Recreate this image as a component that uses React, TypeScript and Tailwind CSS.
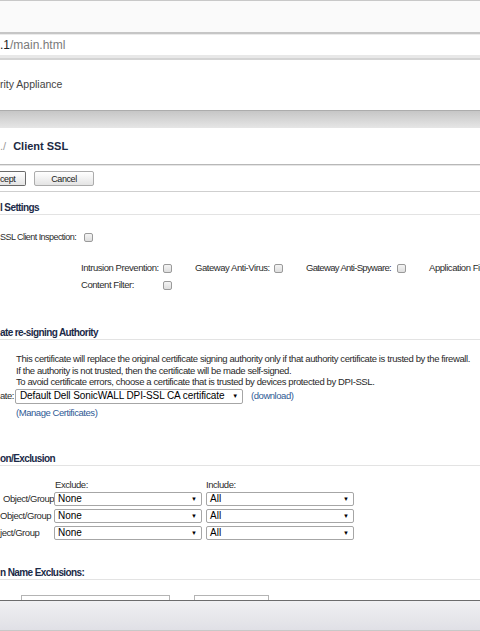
import React from "react";

const label = "font-['Liberation_Sans',Arial,sans-serif] text-[9.5px] tracking-[-0.45px] leading-[12px] text-[#2c2c2c]";
const body = "font-['Liberation_Sans',Arial,sans-serif] text-[9.5px] tracking-[-0.4px] leading-[11.5px] text-[#2a2a2a]";
const title = "font-['Liberation_Sans',Arial,sans-serif] font-bold text-[10px] tracking-[-0.6px] leading-[12px] text-[#1b2a48]";
const link = "font-['Liberation_Sans',Arial,sans-serif] text-[9.5px] tracking-[-0.45px] leading-[12px] text-[#2f5a95]";

function Check() {
  return <span className="shrink-0 inline-block w-[9px] h-[9px] rounded-[2px] border border-[#9a9a9a] bg-gradient-to-b from-[#f4f4f4] to-[#dedede]" />;
}

function Select({ value, w }: { value: string; w: string }) {
  return (
    <div className={`${w} shrink-0 h-[14px] flex items-center justify-between border border-[#a6a6a6] rounded-[2px] bg-white pl-[3px] pr-[4px] font-['Liberation_Sans',Arial,sans-serif] text-[10px] text-black`}>
      <span className="leading-[12px]">{value}</span>
      <span className="text-[6px] leading-none">▼</span>
    </div>
  );
}

function SectionTitle({ text }: { text: string }) {
  return (
    <div className="border-b border-[#e3e3e3]">
      <div className={`${title} h-[12px] whitespace-nowrap`}>{text}</div>
    </div>
  );
}

export default function App() {
  return (
    <div className="w-[480px] h-[631px] overflow-hidden bg-white flex flex-col">
      {/* browser chrome */}
      <div className="h-[32px] shrink-0 bg-[#fafafa] border-t border-[#c8c8c8]" />
      <div className="h-[2px] shrink-0 bg-[#c6c6c6]" />
      <div className="h-[1px] shrink-0 bg-[#ebebeb]" />
      <div className="h-[20px] shrink-0 flex items-center font-['Liberation_Sans',Arial,sans-serif] text-[12px] leading-[14px]">
        <span className="text-[#222]">.1</span>
        <span className="text-[#7a7a7a]">/main.html</span>
      </div>
      <div className="h-[3px] shrink-0 bg-[#e8e8e8]" />
      <div className="h-[2px] shrink-0 bg-[#d4d4d4]" />

      {/* appliance header */}
      <div className="h-[50px] shrink-0 flex items-center font-['Liberation_Sans',Arial,sans-serif] text-[10.5px] text-[#444]">
        rity Appliance
      </div>
      <div className="h-[18px] shrink-0 border-t border-[#acacac] bg-gradient-to-b from-[#c6c6c6] to-[#e6e6e6]" />

      {/* page heading */}
      <div className="h-[36px] shrink-0 flex items-center font-['Liberation_Sans',Arial,sans-serif] font-bold text-[11px] text-[#1c2a44]">
        <span className="text-[#9a9a9a] font-normal">./</span>
        <span className="ml-[7px]">Client SSL</span>
      </div>
      <div className="h-[1px] shrink-0 bg-[#b8b8b8]" />
      <div className="h-[26px] shrink-0 flex items-center gap-[8px] border-t border-[#e6e6e6]">
        <button className="h-[15px] w-[26px] border border-l-0 border-[#6a6a6a] rounded-r-[2px] bg-gradient-to-b from-white to-[#e4e4e4] text-left font-['Liberation_Sans',Arial,sans-serif] text-[9px] tracking-[-0.4px] leading-[12px] text-[#222]">
          cept
        </button>
        <button className="h-[15px] w-[60px] border border-[#acacac] rounded-[2px] bg-gradient-to-b from-white to-[#e4e4e4] font-['Liberation_Sans',Arial,sans-serif] text-[9px] tracking-[-0.4px] leading-[12px] text-[#222]">
          Cancel
        </button>
      </div>
      <div className="h-[1px] shrink-0 bg-[#cfcfcf]" />

      {/* general settings */}
      <div className="pt-[10px] shrink-0">
        <SectionTitle text="l Settings" />
      </div>
      <div className="shrink-0 pt-[15px] h-[29px] flex items-center gap-[7px]">
        <span className={`${label} text-[9px] tracking-[-0.55px] w-[77px] shrink-0 whitespace-nowrap`}>SSL Client Inspection:</span>
        <Check />
      </div>
      <div className="shrink-0 mt-[17px] pl-[81px] h-[14px] flex items-center">
        <span className={`${label} w-[82px] shrink-0 whitespace-nowrap`}>Intrusion Prevention:</span>
        <Check />
        <span className={`${label} w-[79px] ml-[23px] shrink-0 whitespace-nowrap`}>Gateway Anti-Virus:</span>
        <Check />
        <span className={`${label} tracking-[-0.65px] w-[91px] ml-[23px] shrink-0 whitespace-nowrap`}>Gateway Anti-Spyware:</span>
        <Check />
        <span className={`${label} ml-[23px] whitespace-nowrap`}>Application Firewall:</span>
      </div>
      <div className="shrink-0 mt-[3px] pl-[81px] h-[14px] flex items-center">
        <span className={`${label} w-[82px] shrink-0`}>Content Filter:</span>
        <Check />
      </div>

      {/* certificate authority */}
      <div className="pt-[35px] shrink-0">
        <SectionTitle text="ate re-signing Authority" />
      </div>
      <div className={`${body} pt-[13px] pl-[16px] whitespace-nowrap shrink-0`}>
        <div>This certificate will replace the original certificate signing authority only if that authority certificate is trusted by the firewall.</div>
        <div>If the authority is not trusted, then the certificate will be made self-signed.</div>
        <div>To avoid certificate errors, choose a certificate that is trusted by devices protected by DPI-SSL.</div>
      </div>
      <div className="shrink-0 mt-[1px] h-[15px] flex items-center">
        <span className={`${label} w-[15px] shrink-0`}>ate:</span>
        <div className="w-[228px] shrink-0 h-[15px] flex items-center border border-[#a6a6a6] rounded-[2px] bg-white pl-[4px] pr-[4px] font-['Liberation_Sans',Arial,sans-serif] text-[10px] tracking-[-0.1px] text-black">
          <span className="leading-[12px] whitespace-nowrap">Default Dell SonicWALL DPI-SSL CA certificate</span>
          <span className="ml-auto text-[6px] leading-none">▼</span>
        </div>
        <span className={`${link} ml-[8px]`}>(download)</span>
      </div>
      <div className={`${link} shrink-0 pl-[16px] mt-[3px] h-[12px]`}>(Manage Certificates)</div>

      {/* inclusion / exclusion */}
      <div className="pt-[34px] shrink-0">
        <SectionTitle text="on/Exclusion" />
      </div>
      <div className="shrink-0 mt-[13px] h-[12px] flex items-center">
        <span className={`${label} ml-[55px] w-[151px] shrink-0`}>Exclude:</span>
        <span className={label}>Include:</span>
      </div>
      <div className="shrink-0 mt-[1px] flex flex-col gap-[3px]">
        {["Object/Group", "Object/Group", "ject/Group"].map((t, i) => (
          <div key={i} className="h-[14px] flex items-center">
            <span className={`${label} tracking-[-0.6px] w-[54px] shrink-0 whitespace-nowrap ${i === 0 ? "pl-[3px]" : ""}`}>{t}</span>
            <Select value="None" w="w-[148px]" />
            <div className="w-[4px] shrink-0" />
            <Select value="All" w="w-[148px]" />
          </div>
        ))}
      </div>

      {/* common name exclusions */}
      <div className="pt-[27px] shrink-0">
        <SectionTitle text="n Name Exclusions:" />
      </div>
      <div className="shrink-0 mt-[15px] h-[5px] overflow-hidden flex">
        <div className="ml-[21px] w-[149px] h-[14px] shrink-0 border border-[#b4b4b4] bg-white" />
        <div className="ml-[24px] w-[75px] h-[14px] shrink-0 border border-[#b4b4b4] bg-white" />
      </div>

      {/* footer bar */}
      <div className="h-[30px] shrink-0 border-t border-[#6c6c6c] bg-gradient-to-b from-[#f0f0f2] to-[#e0e0e6]" />
      <div className="h-[1px] shrink-0 bg-[#c8c8c8]" />
      <div className="flex-1 bg-white" />
    </div>
  );
}
